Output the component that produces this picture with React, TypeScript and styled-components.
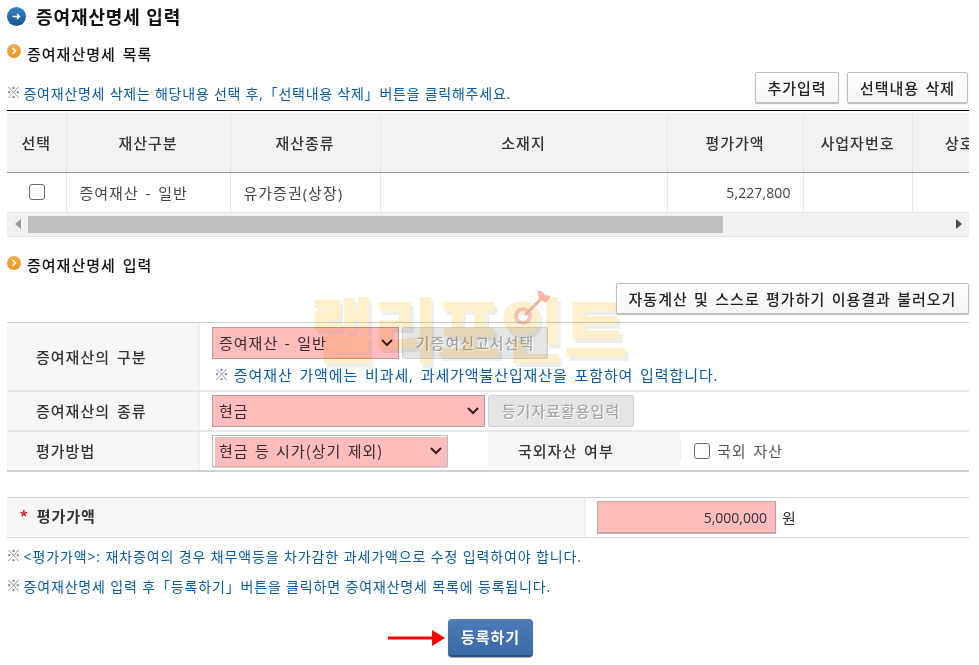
import React from "react";
import styled, { createGlobalStyle } from "styled-components";

const Global = createGlobalStyle`
  html, body { margin: 0; padding: 0; background: #fff; }
  body { width: 979px; height: 665px; overflow: hidden; font-family: "Open Sans", "Noto Sans CJK KR", sans-serif; font-size: 15px; color: #333; }
  * { box-sizing: border-box; }
`;

const Page = styled.div`
  position: relative;
  width: 979px;
  height: 665px;
  padding: 0 10px 0 7px;
  overflow: hidden;
`;

const TitleRow = styled.h1`
  display: flex;
  align-items: center;
  gap: 10px;
  height: 32px;
  margin: 0;
  font-size: 18px;
  font-weight: 700;
  letter-spacing: 0.9px;
  color: #111;
`;

const SectionRow = styled.h2<{ $top: number }>`
  display: flex;
  align-items: center;
  gap: 6px;
  height: 18px;
  margin: ${(p) => p.$top}px 0 0;
  font-size: 15px;
  font-weight: 500;
  letter-spacing: 1px;
  word-spacing: 2px;
  color: #111;
`;

const Toolbar = styled.div`
  display: flex;
  justify-content: space-between;
  align-items: flex-end;
  height: 31px;
  margin-top: 10px;
`;

const Note = styled.p<{ $top?: number; $ls: number }>`
  margin: ${(p) => p.$top ?? 0}px 0 0;
  height: 20px;
  line-height: 20px;
  font-size: 14px;
  letter-spacing: ${(p) => p.$ls}px;
  color: #0a5c9c;
  white-space: nowrap;
`;

const Mark = styled.span`
  position: relative;
  top: -1px;
  margin: 0 -2px 0 -1px;
  font-size: 15px;
  letter-spacing: 0;
  color: #7f8ba0;
`;

const ButtonGroup = styled.div`
  display: flex;
  gap: 8px;
  padding-right: 1px;
`;

const GreyButton = styled.button<{ $w: number }>`
  width: ${(p) => p.$w}px;
  height: 31px;
  padding: 0;
  background: linear-gradient(#fff, #f5f5f5);
  border: 1px solid #bdbdbd;
  border-radius: 2px;
  box-shadow: 0 1px 1px #bbb;
  font: 500 15px "Noto Sans CJK KR", sans-serif;
  letter-spacing: 1px;
  word-spacing: 2px;
  color: #222;
`;

const DisabledButton = styled.button<{ $w: number }>`
  flex: none;
  width: ${(p) => p.$w}px;
  height: 32px;
  margin-left: 3px;
  padding: 0;
  background: #e4e4e4;
  border: 1px solid #d2d2d2;
  border-radius: 2px;
  font: 500 15px "Noto Sans CJK KR", sans-serif;
  letter-spacing: 1px;
  color: #a8a8a8;
  text-shadow: 1px 1px 0 #fff;
`;

const TableFrame = styled.div`
  margin-top: 7px;
  padding-top: 2px;
  border-top: 1px solid #000;
  overflow: hidden;
`;

const ListTable = styled.table`
  width: 1000px;
  border-collapse: collapse;
  table-layout: fixed;
`;

const HeadCell = styled.th`
  height: 59px;
  padding: 0;
  background: #f3f2f1;
  border-left: 1px solid #e6e6e6;
  border-bottom: 1px solid #9a9a9a;
  font-size: 15px;
  font-weight: 500;
  letter-spacing: 1px;
  color: #333;
  &:first-child { border-left: 0; }
`;

const BodyCell = styled.td<{ $align?: string }>`
  height: 40px;
  padding: 0 12px 0 13px;
  border-left: 1px solid #e6e6e6;
  border-bottom: 1px solid #e6e6e6;
  font-size: 15px;
  letter-spacing: 1px;
  word-spacing: 2px;
  color: #444;
  text-align: ${(p) => p.$align ?? "left"};
  &:first-child { border-left: 0; }
`;

const Amount = styled.span`
  font-size: 14px;
  letter-spacing: 0.1px;
`;

const Check = styled.input`
  appearance: none;
  flex: none;
  display: block;
  width: 16px;
  height: 16px;
  margin: 0;
  background: #fff;
  border: 1px solid #6f6378;
  border-radius: 3px;
`;

const CenterCheck = styled(Check)`
  margin: 0 auto;
`;

const ScrollBar = styled.div`
  display: flex;
  align-items: center;
  height: 24px;
  background: #f1f1f1;
  border-bottom: 1px solid #e4e4e4;
`;

const ScrollButton = styled.div`
  flex: none;
  display: flex;
  align-items: center;
  justify-content: center;
  width: 21px;
  height: 17px;
`;

const ScrollTrack = styled.div`
  flex: 1;
  height: 17px;
`;

const ScrollThumb = styled.div`
  height: 17px;
  background: #bebebe;
`;

const AutoRow = styled.div`
  position: relative;
  z-index: 3;
  display: flex;
  justify-content: flex-end;
  margin-top: 9px;
`;

const FormTable = styled.div`
  margin-top: 8px;
  border-top: 1px solid #cfcfcf;
  border-bottom: 2px solid #d0d0d0;
`;

const FormRow = styled.div<{ $h: number }>`
  display: flex;
  height: ${(p) => p.$h}px;
`;

const RowRule = styled.div`
  height: 2px;
  background: #e8e8e8;
`;

const Label = styled.div<{ $w: number; $pad?: number }>`
  flex: none;
  display: flex;
  align-items: center;
  width: ${(p) => p.$w}px;
  padding-left: ${(p) => p.$pad ?? 29}px;
  background: #f7f7f7;
  font-size: 15px;
  font-weight: 500;
  letter-spacing: 1px;
  word-spacing: 2px;
  color: #333;
`;

const Field = styled.div`
  flex: 1;
  display: flex;
  flex-direction: column;
  gap: 6px;
  padding: 4px 0 0 12px;
  border-left: 2px solid #efefef;
`;

const FieldLine = styled.div`
  display: flex;
  align-items: center;
`;

const SelectBox = styled.div<{ $w: number }>`
  position: relative;
  flex: none;
  width: ${(p) => p.$w}px;
  height: 32px;
`;

const PinkSelect = styled.select`
  appearance: none;
  display: block;
  width: 100%;
  height: 100%;
  padding: 0 0 0 6px;
  background-color: #ffbcbc;
  border: 1px solid #b89a9a;
  border-radius: 0;
  font: 15px "Noto Sans CJK KR", sans-serif;
  letter-spacing: 1px;
  word-spacing: 2px;
  color: #3a2a2a;
`;

const OffsetSelect = styled(PinkSelect)`
  background: linear-gradient(#ffbcbc, #ffbcbc) 2px 1px no-repeat, #fff;
  border-color: #bbb;
  box-shadow: 0 2px 0 -1px #ffc8c8;
`;

const Chevron = styled.svg`
  position: absolute;
  right: 6px;
  top: 12px;
  pointer-events: none;
`;

const FieldNote = styled(Note)`
  padding-left: 3px;
  font-size: 15px;
  word-spacing: 2px;
`;

const PlainField = styled(Field)`
  justify-content: center;
  padding-top: 0;
`;

const SideLabel = styled(Label)`
  height: 38px;
  margin-left: 40px;
`;

const InlineField = styled.div`
  display: flex;
  align-items: center;
  gap: 7px;
  padding-left: 13px;
  border-left: 1px solid #eee;
  flex: 1;
  letter-spacing: 1px;
  word-spacing: 2px;
  color: #555;
`;

const PriceTable = styled.div`
  display: flex;
  height: 41px;
  margin-top: 25px;
  border-top: 1px solid #d4d4d4;
  border-bottom: 1px solid #d4d4d4;
`;

const Star = styled.span`
  margin-right: 8px;
  color: #d6141c;
  font-size: 14px;
  font-weight: 700;
`;

const PriceLabel = styled(Label)`
  padding: 0 0 3px 13px;
  font-weight: 700;
`;

const PriceField = styled.div`
  flex: 1;
  display: flex;
  align-items: center;
  gap: 6px;
  padding-left: 11px;
  border-left: 2px solid #eee;
  color: #333;
`;

const PriceInput = styled.input`
  width: 179px;
  height: 32px;
  padding: 0 8px;
  background: #ffbcbc;
  border: 1px solid #bda0a0;
  box-shadow: 0 1px 0 #d9a9a9;
  font: 14px "Open Sans", sans-serif;
  text-align: right;
  color: #333;
`;

const Footer = styled.div`
  display: flex;
  align-items: center;
  gap: 3px;
  margin-top: 23px;
  padding-left: 381px;
`;

const SubmitButton = styled.button`
  width: 85px;
  height: 38px;
  padding: 0;
  background: linear-gradient(#4d7cb7, #3a69a8);
  border: 0;
  border-bottom: 2px solid #2b4f80;
  border-radius: 4px;
  box-shadow: 0 1px 1px #aaa;
  font: 700 15px "Noto Sans CJK KR", sans-serif;
  letter-spacing: 1px;
  color: #fff;
`;

const Watermark = styled.div`
  position: absolute;
  z-index: 2;
  left: 310px;
  top: 280px;
  display: flex;
  align-items: center;
  height: 92px;
  pointer-events: none;
  mix-blend-mode: multiply;
  font: 900 70px "Noto Sans CJK KR", sans-serif;
  letter-spacing: -1px;
  white-space: nowrap;
  color: #fff0cc;
  text-shadow: 3px 4px 0 #eeeeee;
`;

const Dart = styled.svg`
  position: absolute;
  left: 200px;
  top: 8px;
`;

const BlueBullet = () => (
  <svg width="19" height="19" viewBox="0 0 19 19">
    <defs>
      <linearGradient id="bb" x1="0" y1="0" x2="0" y2="1">
        <stop offset="0" stopColor="#3b82c4" />
        <stop offset="1" stopColor="#14558f" />
      </linearGradient>
    </defs>
    <circle cx="9.5" cy="9.5" r="9.5" fill="url(#bb)" />
    <path d="M5.5 9.5h7M10 7l2.6 2.5L10 12" fill="none" stroke="#fff" strokeWidth="1.4" />
  </svg>
);

const OrangeBullet = () => (
  <svg width="14" height="14" viewBox="0 0 14 14" style={{ marginTop: -4 }}>
    <defs>
      <linearGradient id="ob" x1="0" y1="0" x2="0" y2="1">
        <stop offset="0" stopColor="#f6b04c" />
        <stop offset="1" stopColor="#ee9320" />
      </linearGradient>
    </defs>
    <circle cx="7" cy="7" r="7" fill="url(#ob)" />
    <path d="M5.5 4l3 3-3 3" fill="none" stroke="#fff" strokeWidth="1.5" />
  </svg>
);

const Tri = ({ dir }: { dir: "l" | "r" }) => (
  <svg width="6" height="10" viewBox="0 0 6 10">
    <path d={dir === "l" ? "M6 0v10L0 5z" : "M0 0v10l6-5z"} fill={dir === "l" ? "#9a9a9a" : "#505050"} />
  </svg>
);

const RedArrow = () => (
  <svg width="57" height="16" viewBox="0 0 57 16">
    <path d="M0 6.5h44v3H0z" fill="#f00" />
    <path d="M44 0l13 8-13 8z" fill="#f00" />
  </svg>
);

const Down = () => (
  <Chevron width="12" height="8" viewBox="0 0 12 8">
    <path d="M1 1l5 5 5-5" fill="none" stroke="#3d1c1c" strokeWidth="2" />
  </Chevron>
);

const columns = [
  { t: "선택", w: 59 },
  { t: "재산구분", w: 164 },
  { t: "재산종류", w: 150 },
  { t: "소재지", w: 287 },
  { t: "평가가액", w: 136 },
  { t: "사업자번호", w: 109 },
  { t: "상호", w: 95 },
];

export default function App() {
  return (
    <Page>
      <Global />
      <TitleRow>
        <BlueBullet />
        증여재산명세 입력
      </TitleRow>
      <SectionRow $top={12}>
        <OrangeBullet />
        증여재산명세 목록
      </SectionRow>
      <Toolbar>
        <Note $ls={0.76}>
          <Mark>※</Mark> 증여재산명세 삭제는 해당내용 선택 후,「선택내용 삭제」버튼을 클릭해주세요.
        </Note>
        <ButtonGroup>
          <GreyButton $w={84}>추가입력</GreyButton>
          <GreyButton $w={121}>선택내용 삭제</GreyButton>
        </ButtonGroup>
      </Toolbar>
      <TableFrame>
        <ListTable>
          <colgroup>
            {columns.map((c) => (
              <col key={c.t} style={{ width: c.w }} />
            ))}
          </colgroup>
          <thead>
            <tr>
              {columns.map((c) => (
                <HeadCell key={c.t}>{c.t}</HeadCell>
              ))}
            </tr>
          </thead>
          <tbody>
            <tr>
              <BodyCell>
                <CenterCheck type="checkbox" />
              </BodyCell>
              <BodyCell>증여재산 - 일반</BodyCell>
              <BodyCell>유가증권(상장)</BodyCell>
              <BodyCell />
              <BodyCell $align="right">
                <Amount>5,227,800</Amount>
              </BodyCell>
              <BodyCell />
              <BodyCell />
            </tr>
          </tbody>
        </ListTable>
      </TableFrame>
      <ScrollBar>
        <ScrollButton>
          <Tri dir="l" />
        </ScrollButton>
        <ScrollTrack>
          <ScrollThumb style={{ width: 695 }} />
        </ScrollTrack>
        <ScrollButton>
          <Tri dir="r" />
        </ScrollButton>
      </ScrollBar>
      <SectionRow $top={19}>
        <OrangeBullet />
        증여재산명세 입력
      </SectionRow>
      <AutoRow>
        <GreyButton $w={353}>자동계산 및 스스로 평가하기 이용결과 불러오기</GreyButton>
      </AutoRow>
      <FormTable>
        <FormRow $h={67}>
          <Label $w={191}>증여재산의 구분</Label>
          <Field>
            <FieldLine>
              <SelectBox $w={187}>
                <PinkSelect>
                  <option>증여재산 - 일반</option>
                </PinkSelect>
                <Down />
              </SelectBox>
              <DisabledButton $w={146}>기증여신고서선택</DisabledButton>
            </FieldLine>
            <FieldNote $ls={0.9}>
              <Mark>※</Mark> 증여재산 가액에는 비과세, 과세가액불산입재산을 포함하여 입력합니다.
            </FieldNote>
          </Field>
        </FormRow>
        <RowRule />
        <FormRow $h={38}>
          <Label $w={191}>증여재산의 종류</Label>
          <PlainField>
            <FieldLine>
              <SelectBox $w={273}>
                <PinkSelect>
                  <option>현금</option>
                </PinkSelect>
                <Down />
              </SelectBox>
              <DisabledButton $w={146}>등기자료활용입력</DisabledButton>
            </FieldLine>
          </PlainField>
        </FormRow>
        <RowRule />
        <FormRow $h={38}>
          <Label $w={191}>평가방법</Label>
          <PlainField>
            <FieldLine>
              <SelectBox $w={236}>
                <OffsetSelect>
                  <option>현금 등 시가(상기 제외)</option>
                </OffsetSelect>
                <Down />
              </SelectBox>
              <SideLabel $w={192} $pad={30}>
                국외자산 여부
              </SideLabel>
              <InlineField>
                <Check type="checkbox" />
                국외 자산
              </InlineField>
            </FieldLine>
          </PlainField>
        </FormRow>
      </FormTable>
      <PriceTable>
        <PriceLabel $w={577}>
          <Star>*</Star>
          평가가액
        </PriceLabel>
        <PriceField>
          <PriceInput readOnly value="5,000,000" />원
        </PriceField>
      </PriceTable>
      <Note $top={8} $ls={0.88}>
        <Mark>※</Mark> &lt;평가가액&gt;: 재차증여의 경우 채무액등을 차가감한 과세가액으로 수정 입력하여야 합니다.
      </Note>
      <Note $top={10} $ls={0.84}>
        <Mark>※</Mark> 증여재산명세 입력 후「등록하기」버튼을 클릭하면 증여재산명세 목록에 등록됩니다.
      </Note>
      <Footer>
        <RedArrow />
        <SubmitButton>등록하기</SubmitButton>
      </Footer>
      <Watermark>
        랠리포인트
        <Dart width="44" height="40" viewBox="0 0 44 40">
          <circle cx="13" cy="28" r="7" fill="none" stroke="#f5b8a8" strokeWidth="4" opacity="0.85" />
          <path d="M15 27L32 10" stroke="#f2a898" strokeWidth="3" opacity="0.9" />
          <path d="M29 11L27 2l6 2 2 3 6 1-5 7z" fill="#f5b0a0" opacity="0.9" />
        </Dart>
      </Watermark>
    </Page>
  );
}
